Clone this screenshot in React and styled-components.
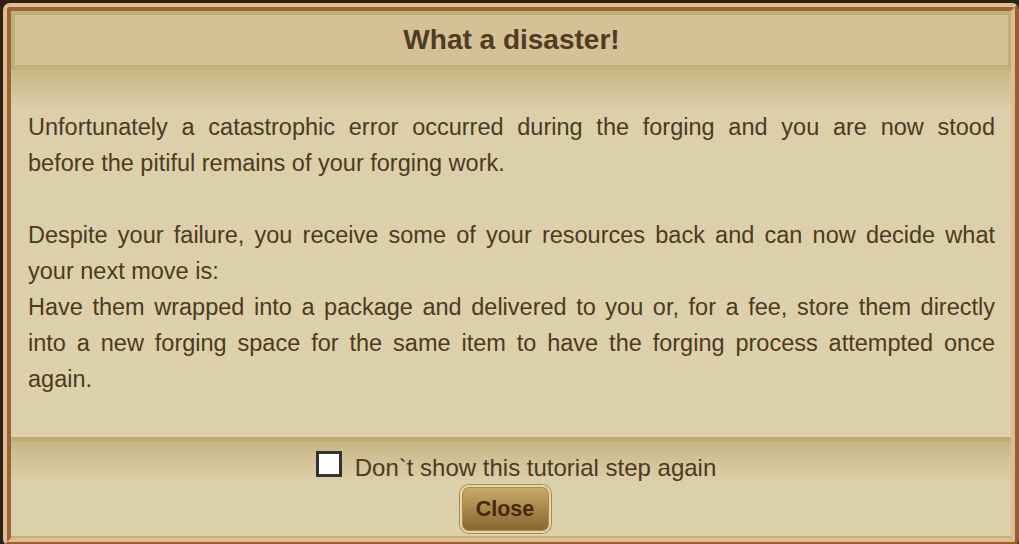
import styled, { createGlobalStyle } from "styled-components";

const GlobalStyle = createGlobalStyle`
  html, body {
    margin: 0;
    padding: 0;
    background: #2a2217;
    overflow: hidden;
  }
  body {
    font-family: "Liberation Sans", Arial, sans-serif;
  }
`;

const Page = styled.div`
  width: 1019px;
  height: 544px;
  padding: 3px 0 0 3px;
  box-sizing: border-box;
`;

const Frame = styled.div`
  border: 4px solid;
  border-color: #e4b993 #93602f #93602f #e4b993;
  border-radius: 7px;
  background: #ddd1ab;
`;

const Inner = styled.div`
  border: 4px solid;
  border-color: #9a6436 #e4b993 #e4b993 #9a6436;
  border-radius: 3px;
  background: #ddd1ab;
`;

const Header = styled.div`
  height: 50px;
  border: 4px solid #c2ae77;
  border-right-width: 3px;
  background: #d5c195;
  display: flex;
  align-items: center;
  justify-content: center;
`;

const Title = styled.h1`
  margin: 0;
  font-size: 28px;
  font-weight: bold;
  color: #4f3c25;
`;

const Body = styled.div`
  padding: 40px 16px 40px 17px;
  background: linear-gradient(#c8b583 0px, #dcd0aa 40px, #ddd1ab 100%);
  font-size: 23.5px;
  line-height: 36px;
  color: #4d3a22;
  text-align: justify;
`;

const Paragraph = styled.p`
  margin: 0 0 ${(p) => (p.$spaced ? "36px" : "0")};
`;

const Line = styled.span`
  display: block;
  white-space: nowrap;
  text-align-last: ${(p) => (p.$end ? "left" : "justify")};
`;

const Footer = styled.div`
  border-top: 4px solid #bfab70;
  border-bottom: 2px solid #c2ae77;
  background: linear-gradient(#c8b585 0px, #dcd0aa 40px, #ddd1ab 100%);
  display: flex;
  flex-direction: column;
  align-items: center;
  padding: 10px 0 3px;
`;

const CheckRow = styled.label`
  display: flex;
  align-items: center;
  gap: 13px;
  margin-left: 10px;
  font-size: 24px;
  color: #4d3a22;
  height: 28px;
`;

const LabelText = styled.span`
  padding-top: 5px;
`;

const Box = styled.span`
  width: 20px;
  height: 20px;
  border: 3px solid #323232;
  background: #fff;
  margin-top: -3px;
`;

const CloseButton = styled.button`
  margin-top: 6px;
  margin-left: -12px;
  width: 91px;
  height: 48px;
  border-radius: 9px;
  border: 2px solid #ead6a2;
  box-shadow: 0 0 0 1px #a88a52, inset 0 0 0 1px #a88a52;
  background: linear-gradient(#cbad6c, #9a7840 70%, #87672f);
  font-family: "Liberation Sans", Arial, sans-serif;
  font-size: 21.5px;
  font-weight: bold;
  color: #45290c;
  cursor: pointer;
`;

const paragraphs = [
  {
    spaced: true,
    lines: [
      "Unfortunately a catastrophic error occurred during the forging and you are now stood",
      "before the pitiful remains of your forging work.",
    ],
  },
  {
    lines: [
      "Despite your failure, you receive some of your resources back and can now decide what",
      "your next move is:",
    ],
  },
  {
    lines: [
      "Have them wrapped into a package and delivered to you or, for a fee, store them directly",
      "into a new forging space for the same item to have the forging process attempted once",
      "again.",
    ],
  },
];

export default function App() {
  return (
    <Page>
      <GlobalStyle />
      <Frame>
        <Inner>
          <Header>
            <Title>What a disaster!</Title>
          </Header>
          <Body>
            {paragraphs.map((para, i) => (
              <Paragraph key={i} $spaced={para.spaced}>
                {para.lines.map((line, j) => (
                  <Line key={j} $end={j === para.lines.length - 1}>
                    {line}
                  </Line>
                ))}
              </Paragraph>
            ))}
          </Body>
          <Footer>
            <CheckRow>
              <Box />
              <LabelText>Don`t show this tutorial step again</LabelText>
            </CheckRow>
            <CloseButton>Close</CloseButton>
          </Footer>
        </Inner>
      </Frame>
    </Page>
  );
}
